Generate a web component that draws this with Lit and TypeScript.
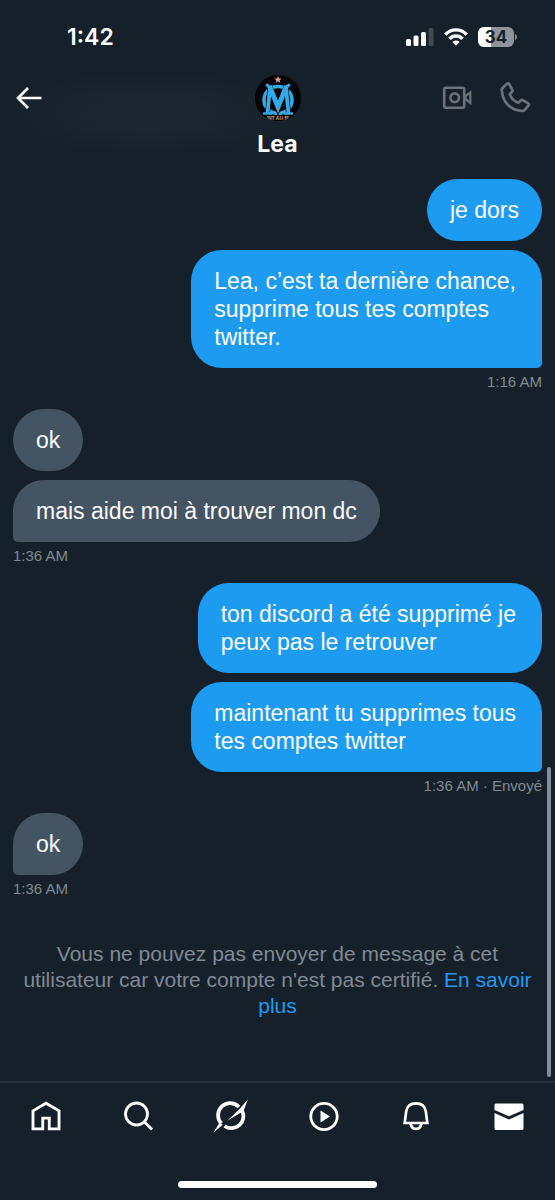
import { LitElement, html, css, svg } from "lit";
import { customElement, property } from "lit/decorators.js";
import { classMap } from "lit/directives/class-map.js";

interface Group {
  mine: boolean;
  texts: string[];
  time: string;
}

const groups: Group[] = [
  {
    mine: true,
    texts: ["je dors", "Lea, c’est ta dernière chance,\nsupprime tous tes comptes\ntwitter."],
    time: "1:16 AM",
  },
  { mine: false, texts: ["ok", "mais aide moi à trouver mon dc"], time: "1:36 AM" },
  {
    mine: true,
    texts: [
      "ton discord a été supprimé je\npeux pas le retrouver",
      "maintenant tu supprimes tous\ntes comptes twitter",
    ],
    time: "1:36 AM · Envoyé",
  },
  { mine: false, texts: ["ok"], time: "1:36 AM" },
];

@customElement("status-bar")
class StatusBar extends LitElement {
  static styles = css`
    :host {
      display: flex;
      align-items: center;
      justify-content: space-between;
      height: 74px;
      padding: 0 38px 0 67px;
      box-sizing: border-box;
      font-family: Inter, sans-serif;
    }
    .clock {
      font-size: 23px;
      line-height: 28px;
      font-weight: 600;
    }
    .indicators {
      display: flex;
      align-items: center;
      gap: 10px;
    }
    svg {
      display: block;
    }
  `;
  render() {
    return html`
      <span class="clock">1:42</span>
      <div class="indicators">
        <svg width="28" height="20" viewBox="0 0 28 20" fill="#fff" aria-label="Signal">
          <rect x="0" y="12" width="5" height="7" rx="1.5" />
          <rect x="7.5" y="8.5" width="5" height="10.5" rx="1.5" />
          <rect x="15" y="5" width="5" height="14" rx="1.5" />
          <rect x="22.500" y="1" width="5" height="18" rx="1.5" fill="#43494f" />
        </svg>
        <svg width="24" height="20" viewBox="0 0 24 20" fill="none" stroke="#fff" stroke-width="3.4" aria-label="Wi-Fi">
          <path d="M1.300 7.600C7.300 1.300 16.700 1.300 22.700 7.600" />
          <path d="M5.400 11.800C9.100 8 14.900 8 18.600 11.800" />
          <path d="M8.400 14.900C10.500 12.900 13.500 12.900 15.600 14.900L12 18.700Z" fill="#fff" stroke="none" />
        </svg>
        <svg width="39" height="20" viewBox="0 0 39 20" aria-label="34 %">
          <path d="M6 0H30a6 6 0 0 1 6 6v8a6 6 0 0 1-6 6H6a6 6 0 0 1-6-6V6a6 6 0 0 1 6-6Z" fill="#8f949a" />
          <path d="M6 0h7v20H6a6 6 0 0 1-6-6V6a6 6 0 0 1 6-6Z" fill="#fff" />
          <path d="M37 7c2.500.8 2.500 5.200 0 6Z" fill="#8f949a" />
          <text x="18" y="16" text-anchor="middle" font-size="17" font-weight="700" fill="#17202a">34</text>
        </svg>
      </div>
    `;
  }
}

@customElement("chat-header")
class ChatHeader extends LitElement {
  static styles = css`
    :host {
      display: grid;
      grid-template-columns: minmax(0, 1fr) auto minmax(0, 1fr);
    }
    button {
      display: block;
      padding: 0;
      border: 0;
      background: none;
      color: #6a7179;
      font: inherit;
    }
    .back {
      justify-self: start;
      align-self: start;
      margin: 9px 0 0 14px;
      color: #fff;
    }
    .person {
      display: flex;
      flex-direction: column;
      align-items: center;
      padding-top: 1px;
    }
    h1 {
      margin: 9px 0 0;
      font-family: Inter, sans-serif;
      font-size: 23px;
      line-height: 28px;
      font-weight: 700;
    }
    .calls {
      display: flex;
      justify-self: end;
      align-self: start;
      gap: 26px;
      margin: 8px 24px 0 0;
    }
    svg {
      display: block;
    }
  `;
  render() {
    return html`
      <button class="back" aria-label="Retour">
        <svg width="30" height="30" viewBox="0 0 30 30" fill="none" stroke="currentColor" stroke-width="2.700">
          <path d="M27.500 15H4M14 5L4 15l10 10" />
        </svg>
      </button>
      <div class="person">
        <svg width="46" height="46" viewBox="0 0 46 46" role="img" aria-label="Photo de profil">
          <defs><clipPath id="disc"><circle cx="23" cy="23" r="23" /></clipPath></defs>
          <g clip-path="url(#disc)">
            <rect width="46" height="46" fill="#000" />
            <path d="M23 1l1 2.600h2.700l-2.100 1.700.8 2.600-2.400-1.600-2.400 1.600.8-2.600-2.100-1.700h2.700Z" fill="#e0a27c" />
            <g fill="none" stroke="#35a8e6">
              <ellipse cx="23" cy="25" rx="14" ry="13.500" stroke-width="3.600" />
              <path d="M15 12L12.500 39M31 12L33.500 39" stroke="#000" stroke-width="5" />
              <path d="M14.500 12L23 33L31.500 12" stroke="#000" stroke-width="6" />
              <path d="M15 12L12.500 39M31 12L33.500 39" stroke-width="3.800" />
              <path d="M14.500 11L23 32L31.500 11" stroke-width="4.800" />
              <path d="M11 9.500L16.500 13M35 9.500L29.500 13" stroke-width="3" />
              <path d="M8 38.500H17M29 38.500H38" stroke-width="2.600" />
            </g>
            <text x="23" y="45" text-anchor="middle" font-size="5" font-weight="700" fill="#e0a27c">'NT AU B'</text>
          </g>
        </svg>
        <h1>Lea</h1>
      </div>
      <div class="calls">
        <button aria-label="Appel vidéo">
          <svg width="32" height="32" viewBox="0 0 32 32" fill="none" stroke="currentColor" stroke-width="2.600">
            <rect x="3.200" y="5.700" width="20" height="20" rx="1.800" />
            <circle cx="13.700" cy="15.700" r="4.300" />
            <path d="M24.500 14.200L29.300 10.500V21L24.500 17.200Z" stroke-width="2.200" />
          </svg>
        </button>
        <button aria-label="Appel audio">
          <svg width="32" height="32" viewBox="0 0 32 32" fill="none" stroke="currentColor" stroke-width="2.700" stroke-linejoin="round">
            <path d="M3.500 6L8 1.800c.8-.7 1.800-.5 2.300.4l3 5.600c.4.8.2 1.500-.4 2.100l-2.200 2.300c1.600 4 4.600 7 8.600 8.600l2.300-2.200c.6-.6 1.400-.8 2.100-.4l5.400 2.900c.9.500 1.100 1.500.4 2.300l-4 4.700c-.6.700-1.300 1-2.200.9C11.500 28.200 3.800 20.500 2.800 8.300c-.1-.9.100-1.700.7-2.300Z" />
          </svg>
        </button>
      </div>
    `;
  }
}

@customElement("message-group")
class MessageGroup extends LitElement {
  @property({ attribute: false }) group!: Group;
  static styles = css`
    :host {
      display: block;
    }
    .group {
      display: flex;
      flex-direction: column;
      align-items: flex-start;
      gap: 9px;
    }
    .mine {
      align-items: flex-end;
    }
    .bubble {
      margin: 0;
      padding: 17px 23px;
      border-radius: 31px;
      background: #445463;
      color: #fff;
      font-size: 23px;
      line-height: 28px;
      white-space: pre-line;
    }
    .mine .bubble {
      background: #1d9bf0;
    }
    .bubble.wrapped {
      padding-right: 26px;
    }
    .bubble.tail {
      border-bottom-left-radius: 5px;
    }
    .mine .bubble.tail {
      border-bottom-left-radius: 31px;
      border-bottom-right-radius: 5px;
    }
    time {
      margin-top: -5px;
      color: #7f8a95;
      font-size: 15px;
      line-height: 20px;
    }
  `;
  render() {
    const { mine, texts, time } = this.group;
    return html`<div class=${classMap({ group: true, mine })}>
      ${texts.map(
        (t, i) =>
          html`<p class=${classMap({ bubble: true, wrapped: t.includes("\n"), tail: i === texts.length - 1 })}>${t}</p>`
      )}
      <time>${time}</time>
    </div>`;
  }
}

const tabs = [
  {
    label: "Accueil",
    icon: svg`<path d="M3 11.700L17 3.500l14 8.200V31H20.500V19.500h-7V31H3Z" transform="translate(1.200 1) scale(.93)" fill="none" stroke="#fff" stroke-width="3.100"/>`,
  },
  {
    label: "Rechercher",
    icon: svg`<g fill="none" stroke="#fff" stroke-width="2.800"><circle cx="14.500" cy="15" r="11"/><path d="M22.500 23l7.500 7.500"/></g>`,
  },
  {
    label: "Grok",
    icon: svg`<g fill="none" stroke="#fff" stroke-width="3.700"><path d="M7.300 24.500A12 12 0 0 1 25 8"/><path d="M28 11.500A12 12 0 0 1 10.500 27"/></g><path d="M34 0.300L29.500 12L13.300 21.700L25.500 10Z" fill="#fff"/><path d="M-.7 33.700L5.800 23.500L8.800 25.700Z" fill="#fff"/>`,
  },
  {
    label: "Vidéos",
    icon: svg`<circle cx="17" cy="17.500" r="13.200" fill="none" stroke="#fff" stroke-width="2.800"/><path d="M13.500 11.500v12l9.500-6Z" fill="#fff"/>`,
  },
  {
    label: "Notifications",
    icon: svg`<g fill="none" stroke="#fff" stroke-width="2.700"><path d="M5.700 24L7.200 12.500C8 7 12 4.300 17 4.300S26 7 26.800 12.500L28.300 24Z"/><path d="M11.600 24.500C12.200 28 14 30 17 30s4.800-2 5.400-5.500"/></g>`,
  },
  {
    label: "Messages",
    icon: svg`<path d="M2.500 6a1.500 1.500 0 0 1 1.500-1.500h26a1.500 1.500 0 0 1 1.500 1.500v5L17 17.200L2.500 11Z M2.500 14L17 20.400l14.500-6.400V29.500a1.500 1.500 0 0 1-1.500 1.500h-26a1.500 1.500 0 0 1-1.500-1.500Z" fill="#fff"/>`,
  },
];

@customElement("tab-bar")
class TabBar extends LitElement {
  static styles = css`
    :host {
      display: block;
      border-top: 2px solid #26313d;
      padding-bottom: 12px;
    }
    nav {
      display: grid;
      grid-template-columns: repeat(6, 1fr);
      padding: 16px 0 48px;
    }
    a {
      display: flex;
      justify-content: center;
    }
    svg {
      display: block;
      overflow: visible;
    }
    .home {
      width: 36%;
      height: 7px;
      margin: 0 auto;
      border-radius: 4px;
      background: #fff;
    }
  `;
  render() {
    return html`
      <nav>
        ${tabs.map(
          (t) => html`<a href="#" aria-label=${t.label}>
            <svg width="34" height="34" viewBox="0 0 34 34">${t.icon}</svg>
          </a>`
        )}
      </nav>
      <div class="home"></div>
    `;
  }
}

@customElement("app-root")
class AppRoot extends LitElement {
  static styles = css`
    :host {
      display: flex;
      flex-direction: column;
      min-height: 100vh;
      background: #16202a;
      color: #fff;
      font-family: "Liberation Sans", Arial, sans-serif;
    }
    .top {
      padding-bottom: 21px;
      background: radial-gradient(closest-side, #1b2631 40%, transparent) 0 70px / 300px 86px no-repeat;
    }
    main {
      position: relative;
      flex: 1;
      padding: 0 13px;
    }
    .thread {
      display: flex;
      flex-direction: column;
      gap: 17px;
    }
    .notice {
      margin: 42px 0 0;
      color: #7f8a95;
      font-size: 21px;
      line-height: 26px;
      text-align: center;
    }
    .notice a {
      color: #1d9bf0;
      text-decoration: none;
    }
    .scroll {
      position: absolute;
      right: 4px;
      bottom: 4px;
      width: 4px;
      height: 34.4%;
      border-radius: 2px;
      background: #858c94;
    }
  `;
  render() {
    return html`
      <header class="top">
        <status-bar></status-bar>
        <chat-header></chat-header>
      </header>
      <main>
        <div class="thread">
          ${groups.map((g) => html`<message-group .group=${g}></message-group>`)}
        </div>
        <p class="notice">
          Vous ne pouvez pas envoyer de message à cet utilisateur car votre compte n'est pas
          certifié. <a href="#">En savoir plus</a>
        </p>
        <div class="scroll"></div>
      </main>
      <tab-bar></tab-bar>
    `;
  }
}
